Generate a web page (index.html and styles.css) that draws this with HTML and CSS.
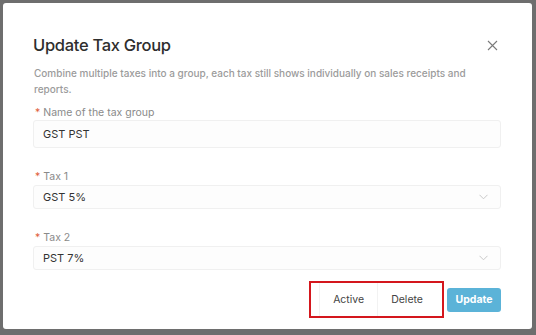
FILE: index.html
```html
<!DOCTYPE html>
<html>
<head>
<meta charset="utf-8">
<link rel="stylesheet" href="styles.css">
</head>
<body>
<div class="modal">
  <div class="header">
    <h1 class="title">Update Tax Group</h1>
    <svg class="close" width="11" height="11" viewBox="0 0 11 11"><path d="M1 1L10 10M10 1L1 10" stroke="#7a7a7a" stroke-width="1.1" fill="none"/></svg>
  </div>
  <p class="desc">Combine multiple taxes into a group, each tax still shows individually on sales receipts and reports.</p>
  <div class="field">
    <div class="label"><span class="req">*</span>Name of the tax group</div>
    <div class="input">GST PST</div>
  </div>
  <div class="field gap">
    <div class="label"><span class="req">*</span>Tax 1</div>
    <div class="select"><span>GST 5%</span><svg width="9" height="6" viewBox="0 0 9 6"><path d="M0.5 0.8L4.5 4.8L8.5 0.8" stroke="#c8c8c8" stroke-width="1" fill="none"/></svg></div>
  </div>
  <div class="field gap">
    <div class="label"><span class="req">*</span>Tax 2</div>
    <div class="select"><span>PST 7%</span><svg width="9" height="6" viewBox="0 0 9 6"><path d="M0.5 0.8L4.5 4.8L8.5 0.8" stroke="#c8c8c8" stroke-width="1" fill="none"/></svg></div>
  </div>
  <div class="footer">
    <div class="highlight">
      <button class="btn">Active</button>
      <button class="btn">Delete</button>
    </div>
    <button class="primary">Update</button>
  </div>
</div>
</body>
</html>
```
FILE: styles.css
```css
html, body {
  margin: 0;
  height: 100%;
}
body {
  background: #6e6e6e;
  padding: 3px 4px 6px 3px;
  box-sizing: border-box;
  font-family: Inter, "Liberation Sans", sans-serif;
  display: flex;
}
.modal {
  flex: 1;
  background: #fff;
  border-radius: 3px;
  padding: 31px 31px 0 30px;
  display: flex;
  flex-direction: column;
}
.header {
  display: flex;
  justify-content: space-between;
  align-items: center;
  height: 22px;
}
.title {
  margin: 0;
  font-size: 16.5px;
  font-weight: 500;
  color: #2e2e2e;
  letter-spacing: -0.3px;
}
.close {
  margin-right: 3px;
}
.desc {
  margin: 9px 0 0 1px;
  max-width: 445px;
  font-size: 10px;
  line-height: 16px;
  color: #9b9b9b;
  font-weight: 500;
  letter-spacing: 0;
}
.field {
  display: flex;
  flex-direction: column;
  margin-top: 9px;
}
.field.gap {
  margin-top: 22px;
}
.label {
  font-size: 10.5px;
  line-height: 14px;
  color: #8a8a8a;
  padding-left: 2px;
}
.req {
  color: #e0603a;
  margin-right: 3px;
}
.input, .select {
  margin-top: 1px;
  border: 1px solid #f0f0f0;
  border-radius: 3px;
  background: #fdfdfd;
  font-size: 11px;
  color: #333;
  padding: 0 9px;
  display: flex;
  align-items: center;
}
.input {
  height: 26px;
  margin-top: 0;
}
.select {
  height: 22px;
  justify-content: space-between;
}
.select svg {
  margin-right: 3px;
}
.footer {
  margin-top: 11px;
  display: flex;
  justify-content: flex-end;
  align-items: center;
  gap: 3px;
}
.highlight {
  border: 2px solid #d4171d;
  height: 33px;
  width: 125px;
  display: flex;
  align-items: center;
  justify-content: flex-end;
  padding-right: 6px;
  box-sizing: content-box;
}
.btn {
  font-family: inherit;
  background: #fff;
  border: none;
  border-left: 1px solid #f2f2f2;
  height: 33px;
  padding: 0 13px;
  font-size: 10.5px;
  color: #444;
}
.primary {
  font-family: inherit;
  background: #5bb3d8;
  color: #fff;
  border: none;
  border-radius: 3px;
  height: 24px;
  width: 54px;
  font-size: 10.5px;
  font-weight: 700;
}
```
